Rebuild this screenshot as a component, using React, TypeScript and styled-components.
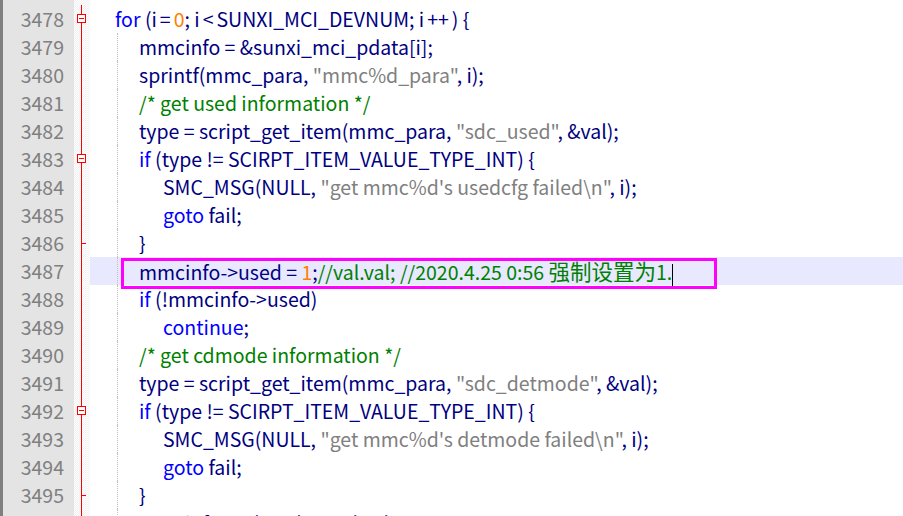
import React from "react";
import styled, { createGlobalStyle } from "styled-components";

const G = createGlobalStyle`
  body { margin: 0; background: #fff; overflow: hidden; }
`;
const Editor = styled.div`
  display: flex; width: 903px; height: 516px; overflow: hidden;
  font-family: "Noto Sans CJK SC", "Open Sans", sans-serif; font-size: 19.5px;
`;
const Numbers = styled.div`
  width: 74px; background: #e4e4e4; border-left: 3px solid #808080; padding-top: 5px;
  color: #808080; text-align: right; box-sizing: border-box; padding-right: 10px;
`;
const Num = styled.div` height: 28px; line-height: 28px; `;
const Fold = styled.div`
  width: 16px; padding-top: 5px;
  background: repeating-conic-gradient(#f0f0f0 0 25%, #ffffff 0 50%) 0 0 / 2px 2px;
`;
const FoldCell = styled.div`
  height: 28px; position: relative;
  &::before { content: ""; position: absolute; left: 7px; top: 0; bottom: 0; width: 1px; background: #ff0000; }
`;
const Box = styled.div`
  position: absolute; left: 3px; top: 9px; width: 9px; height: 9px; background: #fff;
  border: 1px solid #ff0000; box-sizing: border-box;
  &::after { content: ""; position: absolute; left: 1px; right: 1px; top: 3px; height: 1px; background: #ff0000; }
`;
const Tick = styled.div`
  position: absolute; left: 7px; top: 14px; width: 5px; height: 1px; background: #ff0000;
`;
const Code = styled.div` flex: 1; padding-top: 5px; position: relative; `;
const Row = styled.div<{ $hl?: boolean }>`
  height: 28px; line-height: 28px; white-space: pre; color: #000080; position: relative;
  background: ${p => (p.$hl ? "#e8e8ff" : "transparent")};
`;
const Indent = styled.span<{ $n: number }>` display: inline-block; width: ${p => 25 + p.$n * 24}px; `;
const Guide = styled.div<{ $x: number }>`
  position: absolute; left: ${p => p.$x}px; top: 0; bottom: 0; border-left: 1px dotted #c0c0c0;
`;
const K = styled.span` color: #0000ff; `;
const N = styled.span` color: #ff8000; `;
const S = styled.span` color: #808080; `;
const C = styled.span` color: #008000; `;
const Op = styled.span` padding: 0 3px; `;
const Cjk = styled.span` font-size: 21.5px; `;
const Mark = styled.div`
  position: absolute; left: 31px; top: 1px; width: 596px; height: 31px;
  border: 3px solid #ff00ff; box-sizing: border-box;
`;
const Caret = styled.span` display:inline-block; width:1px; height:22px; background:#000; vertical-align:middle; `;

type L = [number, React.ReactNode];
const lines: L[] = [
  [0, <><K>for</K> (i<Op>=</Op><N>0</N>; i<Op>&lt;</Op>SUNXI_MCI_DEVNUM; i<Op>++</Op>) {"{"}</>],
  [1, <>mmcinfo = &amp;sunxi_mci_pdata[i];</>],
  [1, <>sprintf(mmc_para, <S>"mmc%d_para"</S>, i);</>],
  [1, <C>/* get used information */</C>],
  [1, <>type = script_get_item(mmc_para, <S>"sdc_used"</S>, &amp;val);</>],
  [1, <><K>if</K> (type != SCIRPT_ITEM_VALUE_TYPE_INT) {"{"}</>],
  [2, <>SMC_MSG(NULL, <S>"get mmc%d's usedcfg failed\n"</S>, i);</>],
  [2, <><K>goto</K> fail;</>],
  [1, <>{"}"}</>],
  [1, <>mmcinfo-&gt;used = <N>1</N>;<C>//val.val; //2020.4.25 0:56 <Cjk>强制设置为</Cjk>1.</C><Caret /></>],
  [1, <><K>if</K> (!mmcinfo-&gt;used)</>],
  [2, <><K>continue</K>;</>],
  [1, <C>/* get cdmode information */</C>],
  [1, <>type = script_get_item(mmc_para, <S>"sdc_detmode"</S>, &amp;val);</>],
  [1, <><K>if</K> (type != SCIRPT_ITEM_VALUE_TYPE_INT) {"{"}</>],
  [2, <>SMC_MSG(NULL, <S>"get mmc%d's detmode failed\n"</S>, i);</>],
  [2, <><K>goto</K> fail;</>],
  [1, <>{"}"}</>],
  [1, <>mmcinfo-&gt;cdmode = val.val;</>],
];

const boxes = [0, 5, 14];
const ticks = [8, 17];

export default function App() {
  return (
    <>
      <G />
      <Editor>
        <Numbers>{lines.map((_, i) => <Num key={i}>{3478 + i}</Num>)}</Numbers>
        <Fold>
          {lines.map((_, i) => (
            <FoldCell key={i}>
              {boxes.includes(i) && <Box />}
              {ticks.includes(i) && <Tick />}
            </FoldCell>
          ))}
        </Fold>
        <Code>
          {lines.map(([n, c], i) => (
            <Row key={i} $hl={i === 9}>
              {i > 0 && <Guide $x={27} />}
              <Indent $n={n} />{c}
              {i === 9 && <Mark />}
            </Row>
          ))}
        </Code>
      </Editor>
    </>
  );
}
